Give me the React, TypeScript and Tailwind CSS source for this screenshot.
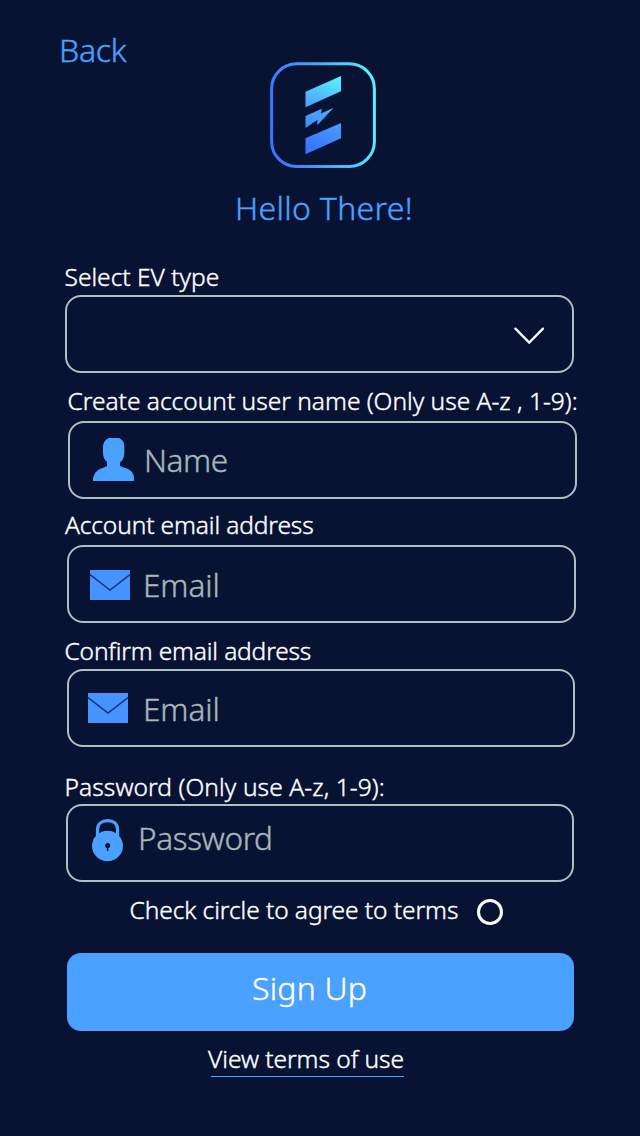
import type { ReactNode } from "react";

function Logo() {
  return (
    <svg viewBox="0 0 106 106" className="ml-[270px] -mt-[8px] block h-[106px] w-[106px] shrink-0" fill="none">
      <defs>
        <linearGradient id="frame" x1="0" y1="60" x2="106" y2="46" gradientUnits="userSpaceOnUse">
          <stop offset="0" stopColor="#3a74ff" />
          <stop offset="0.5" stopColor="#48a8f8" />
          <stop offset="1" stopColor="#58effd" />
        </linearGradient>
        <linearGradient id="mark" x1="68" y1="16" x2="38" y2="88" gradientUnits="userSpaceOnUse">
          <stop offset="0" stopColor="#54f2fb" />
          <stop offset="0.4" stopColor="#4fabfd" />
          <stop offset="1" stopColor="#3672ff" />
        </linearGradient>
      </defs>
      <rect x="1.6" y="1.8" width="102.8" height="102.6" rx="25" stroke="url(#frame)" strokeWidth="3" />
      <g fill="url(#mark)">
        <path d="M35.5 29.7 71 14V29.3L35.5 45.3Z" />
        <path d="M35.5 54 51.8 46.8 51 51.6 63.7 45.8 47.3 63.3V58L35.5 66Z" />
        <path d="M35.5 76.3 71 61V76.3L35.5 92.3Z" />
      </g>
    </svg>
  );
}

function UserIcon() {
  return (
    <svg viewBox="0 0 42 43" className="ml-[23px] mt-[15px] h-[43px] w-[42px] shrink-0" fill="#4ba1ff">
      <path d="M16 0H26C29 1.5 31.3 4 31.3 8V15C31.3 19.5 29.8 22.5 27 24.5V28L30 29.3C37 31 41 34.5 41 40V43H0V41C.8 35 5 31 11 29.5L14 28V24C11.5 21.8 10 19 10 15V8C10.5 4 12.5 1.5 16 0Z" />
    </svg>
  );
}

function MailIcon({ className }: { className: string }) {
  return (
    <svg viewBox="0 0 40 30" className={`h-[30px] w-10 shrink-0 ${className}`}>
      <path d="M0 0H40V30H0Z" fill="#4692ff" />
      <path d="M0 4.5 20 20 40 4.5" fill="none" stroke="#123477" strokeWidth="1.4" />
    </svg>
  );
}

function LockIcon() {
  return (
    <svg viewBox="0 0 32 43" className="ml-6 mt-[13px] h-[43px] w-8 shrink-0">
      <path d="M5.5 17V10.5C5.5 4.8 10 1.7 15.8 1.7S25.6 4.8 25.6 10.5V17" fill="none" stroke="#4ba1ff" strokeWidth="3.2" />
      <ellipse cx="15.5" cy="27" rx="15.5" ry="15.3" fill="#4ba1ff" />
      <circle cx="15.7" cy="26.4" r="2.5" fill="#081334" />
      <path d="M14.9 27H16.4V32H14.9Z" fill="#081334" />
    </svg>
  );
}

function Label({ className, children }: { className: string; children: ReactNode }) {
  return (
    <label className={`block h-[30px] text-[24.5px] leading-[30px] whitespace-pre text-white ${className}`}>
      {children}
    </label>
  );
}

function Field({ className, children }: { className: string; children: ReactNode }) {
  return (
    <div className={`flex h-[78px] shrink-0 items-start rounded-[16px] border-2 border-[#adbfbf] text-[31.5px] leading-10 text-[#a5b7b9] ${className}`}>
      {children}
    </div>
  );
}

export default function App() {
  return (
    <main className="flex h-[1136px] w-[640px] flex-col overflow-hidden bg-[#081334] font-['Noto_Sans',sans-serif] font-light [-webkit-text-stroke:0.4px_currentColor]">
      <a className="mt-[30px] ml-[59px] block h-10 w-20 text-[32px] leading-10 tracking-[-0.3px] text-[#4ba1ff]">Back</a>
      <Logo />
      <h1 className="mt-[20px] ml-[235px] h-10 text-[32px] leading-10 tracking-[0.32px] whitespace-pre text-[#4ba1ff]">Hello There!</h1>

      <Label className="mt-[34px] ml-[64.5px]">Select EV type</Label>
      <Field className="mt-[3px] ml-[65px] w-[509px] justify-end">
        <svg viewBox="0 0 32 20" className="mt-[29px] mr-[28px] h-5 w-8" fill="none" stroke="#fff" strokeWidth="2.3" strokeLinecap="round">
          <path d="M3.4 2.6 17.2 16.5 31 2.6" />
        </svg>
      </Field>

      <Label className="mt-[13px] ml-[67.5px]">Create account user name (Only use A-z , 1-9):</Label>
      <Field className="mt-[5px] ml-[68px] w-[509px]">
        <UserIcon />
        <span className="mt-[17px] ml-[9px] tracking-[-0.4px]">Name</span>
      </Field>

      <Label className="mt-[11px] ml-[65px] tracking-[-0.12px]">Account email address</Label>
      <Field className="mt-[5px] ml-[67px] w-[509px]">
        <MailIcon className="mt-[23px] ml-[21px]" />
        <span className="mt-[18px] ml-[13px] tracking-[-0.1px]">Email</span>
      </Field>

      <Label className="mt-[13px] ml-[64.5px] tracking-[-0.16px]">Confirm email address</Label>
      <Field className="mt-[3px] ml-[67px] w-[508px]">
        <MailIcon className="mt-[22px] ml-[19px]" />
        <span className="mt-[18px] ml-[15px] tracking-[-0.1px]">Email</span>
      </Field>

      <Label className="mt-[25px] ml-[64.5px] tracking-[0.09px]">Password (Only use A-z, 1-9):</Label>
      <Field className="mt-[2px] ml-[66px] w-[508px]">
        <LockIcon />
        <span className="mt-[12px] ml-[14px] tracking-[-0.35px]">Password</span>
      </Field>

      <div className="mt-[13px] ml-[129.5px] flex h-[30px]">
        <Label className="w-[347.5px] tracking-[-0.07px]">Check circle to agree to terms</Label>
        <button className="mt-1 h-[26px] w-[26px] shrink-0 rounded-full border-3 border-white" aria-label="Agree" />
      </div>

      <button className="mt-[28px] ml-[67px] flex h-[78px] w-[507px] shrink-0 rounded-[14px] bg-[#4ba1ff] pt-[15px] pl-[185px] text-[32px] leading-10 tracking-[0.2px] text-white">
        Sign Up
      </button>

      <a className="mt-[13px] ml-[208px] block h-[30px] w-[200px] text-[24.5px] leading-[30px] tracking-[-0.04px] whitespace-pre text-white">View terms of use</a>
      <div className="mt-[2px] ml-[211px] h-px w-[193px] shrink-0 bg-[#4ba1ff]" />
    </main>
  );
}
